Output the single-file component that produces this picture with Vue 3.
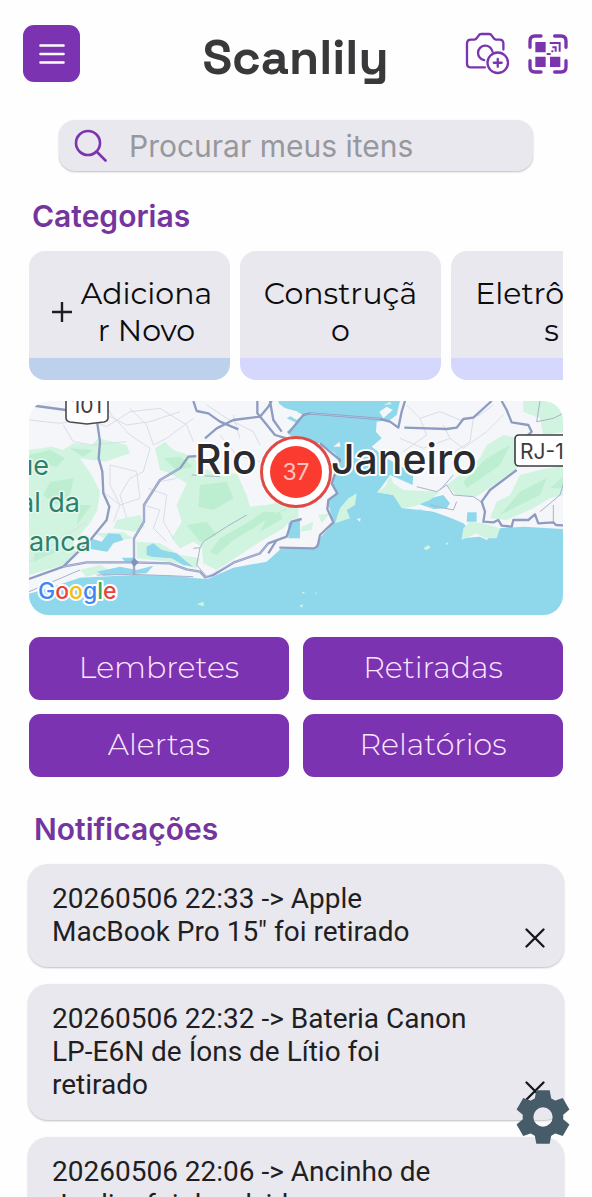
<script setup>
import { ref } from 'vue'

const search = ref('')

const categories = [
  { id: 'new', label: 'Adicionar Novo', isAdd: true },
  { id: 'construcao', label: 'Construção' },
  { id: 'eletronicos', label: 'Eletrônicos' }
]

const actions = ['Lembretes', 'Retiradas', 'Alertas', 'Relatórios']

const notifications = ref([
  { id: 1, text: '20260506 22:33 -> Apple MacBook Pro 15" foi retirado' },
  { id: 2, text: '20260506 22:32 -> Bateria Canon LP-E6N de Íons de Lítio foi retirado' },
  { id: 3, text: '20260506 22:06 -> Ancinho de Jardim foi devolvido' }
])

const gearTeeth = [0, 60, 120, 180, 240, 300]

function dismiss(id) {
  notifications.value = notifications.value.filter((n) => n.id !== id)
}
</script>

<template>
  <div class="home">
    <header class="home-header">
      <button type="button" class="menu-btn" aria-label="Menu">
        <svg width="26" height="20" viewBox="0 0 26 20">
          <path d="M1.5 1.5h23M1.5 10h23M1.5 18.5h23" stroke="#fff" stroke-width="2.6" stroke-linecap="round" />
        </svg>
      </button>
      <h1 class="home-logo">Scanlily</h1>
      <div class="header-tools">
        <button type="button" class="icon-btn" aria-label="Adicionar foto">
          <svg width="45" height="43" viewBox="0 0 136 128" fill="none" stroke="#7a35ae" stroke-width="7" stroke-linecap="round">
            <path d="M60 106H18Q6 106 6 94V34Q6 22 18 22H28Q33 22 36 17L41 10Q44 5 49 5H73Q78 5 81 10L86 17Q89 22 94 22H104Q116 22 116 34V52" />
            <path d="M58 84A22 22 0 1 1 83 58" />
            <circle cx="99" cy="92" r="31" />
            <path d="M99 80v24M87 92h24" />
          </svg>
        </button>
        <button type="button" class="icon-btn" aria-label="Ler código QR">
          <svg width="40" height="40" viewBox="0 0 120 120" fill="none" stroke="#7a35ae">
            <path
              d="M6 40V21Q6 6 21 6H39M80 6H99Q114 6 114 21V40M114 80V99Q114 114 99 114H80M39 114H21Q6 114 6 99V80"
              stroke-width="10"
              stroke-linecap="round"
            />
            <path d="M22 24h31v31H22zM22 68h31v31H22zM66 68h31v31H66z" fill="#7a35ae" stroke="none" />
            <path d="M65 27H95V53M73 40H83V53M56 60H68M70 52H76" stroke-width="6" />
          </svg>
        </button>
      </div>
    </header>

    <label class="search-bar">
      <svg width="33" height="33" viewBox="0 0 33 33" fill="none" stroke="#7a35ae" stroke-width="2.6" stroke-linecap="round">
        <circle cx="14" cy="14" r="12" />
        <path d="M22.5 22.5l9 9" />
      </svg>
      <input v-model="search" type="text" class="search-input" placeholder="Procurar meus itens" aria-label="Procurar meus itens" />
    </label>

    <h2 class="section-title">Categorias</h2>
    <div class="category-list">
      <button
        v-for="cat in categories"
        :key="cat.id"
        type="button"
        class="category-card"
        :class="{ add: cat.isAdd }"
      >
        <span class="category-body">
          <svg v-if="cat.isAdd" class="category-plus" width="22" height="22" viewBox="0 0 22 22">
            <path d="M11 1v20M1 11h20" stroke="#1d1d22" stroke-width="2.4" />
          </svg>
          <span class="category-label">{{ cat.label }}</span>
        </span>
      </button>
    </div>

    <!-- Mapa dos itens -->
    <div class="map">
      <svg class="map-canvas" viewBox="0 0 534 214" preserveAspectRatio="xMidYMid slice">
        <rect width="534" height="214" fill="#f5f6f9" />
        <g transform="scale(.333333) translate(-27 -18)" stroke-linejoin="round">
          <g fill="#d0f4df">
            <path d="M27 165L95 155 130 165 160 145 215 150 235 130 320 150 330 175 255 200 180 190 215 240 240 290 232 345 210 385 160 440 170 480 130 510 80 525 27 540Z" />
            <path d="M405 160L435 140 460 165 520 185 540 215 600 240 650 235 680 300 690 335 740 330 835 310V350L790 400 720 440 660 480 590 525 550 505 545 455 520 440 480 460 455 430 485 380 470 330 500 265 450 235 420 225Z" />
            <path d="M290 375L360 360 375 395 345 410 280 400ZM225 415L310 412 340 430 270 440ZM350 440L420 445 480 480 540 490 530 520 450 500 350 490ZM180 525L240 510 270 525 200 545Z" />
            <path d="M1510 18H1640V110L1570 120 1560 70 1510 50ZM1380 190L1400 150 1450 120 1500 130 1520 180 1490 220 1420 270 1370 305 1310 300 1280 270 1320 240ZM1500 240L1560 225 1635 210V300L1590 310 1540 340 1460 375 1410 370 1430 320 1470 300Z" />
          </g>
          <g fill="#bdeed1">
            <path d="M27 180L90 165 135 190 110 215 60 205 27 225ZM150 160L220 165 190 185ZM90 260L160 250 150 300 110 330 70 300ZM50 440L110 470 40 500ZM170 390L215 330 180 330Z" />
            <path d="M430 190L480 185 520 215 470 225ZM540 270L620 260 640 310 580 345 535 335ZM500 390L560 380 590 420 540 440ZM600 430L680 385 730 350 770 352 700 400 640 435 590 480 570 470ZM740 370L800 340 790 370 720 410Z" />
            <path d="M1400 190L1470 150 1440 210 1340 280 1330 260ZM1500 290L1580 250 1560 300 1480 340 1440 360ZM1590 280L1635 240V280Z" />
          </g>
          <g fill="none" stroke="#d9dde9" stroke-width="3">
            <path d="M27 75L120 85 200 70 260 95 330 50 420 40 500 90 520 140M130 90L160 140 215 150 320 140M250 20L275 60 330 120 390 160 370 230 330 250 300 300 320 370M330 40L380 90 400 150 440 130 520 70M260 60L320 90 390 80 480 50" />
            <path d="M270 210L350 230 360 310 300 330 270 270ZM250 290L300 330 280 380M385 280L440 300 430 380 460 430M370 330L420 345 400 400 440 440M390 300L420 260 470 250M27 500L110 440 200 380M560 30L620 70 700 110 720 150M600 120L650 180 720 200M640 60L660 130" />
            <path d="M1160 30L1200 70 1260 50 1320 75 1380 60 1420 30M1140 130L1210 160 1290 130 1330 160 1400 110 1450 60M1150 170L1220 120 1200 70M1290 130L1270 90M1360 70L1350 140 1290 180" />
          </g>
          <path
            fill="#8fd8ec"
            d="M20 598L90 578 180 548 340 540 450 541 530 550 562 552 640 518 740 500 782 462 890 462 903 425 940 385 930 345 922 318 952 290 935 268 960 200 945 175 900 145 830 140 800 110 832 85 800 70 835 50 780 35 775 18H1140L1130 60 1110 75 1070 80 1068 110 1085 130 1055 155 1100 190 1180 235 1178 270 1110 240 1095 262 1072 292 1120 300 1150 340 1250 350 1330 385 1340 395 1325 430 1380 425 1400 435 1440 400 1510 395 1635 402V670H20Z"
          />
          <g fill="#8fd8ec">
            <path d="M212 430L245 440 265 415 300 418 310 435 280 445 262 470 212 462ZM380 455L400 445 425 465 470 475 500 500 520 515 490 510 455 490 395 485 380 480ZM230 530L300 515 350 525 400 512 380 535 250 542ZM305 488H340V500H315ZM805 385Q815 372 840 375V430H805Z" />
            <path d="M1180 335L1230 310 1270 300 1290 325 1280 340 1200 345ZM1342 352H1370V380H1340Z" />
          </g>
          <g fill="#f5f6f9">
            <path d="M775 25L810 50 790 60ZM805 60L830 50 850 60 830 75ZM1078 50L1100 35 1118 45 1090 70ZM940 155L958 140 962 155ZM1020 380L1010 372 1022 370ZM1150 335L1190 325 1250 345 1310 362 1320 378 1240 350Z" />
          </g>
          <g fill="#d0f4df">
            <path d="M1072 292L1095 275 1110 240 1120 265 1150 285 1260 290 1230 315 1180 335 1145 340 1120 300ZM960 340L985 310 1010 295 1005 330 980 345 990 370 945 385ZM845 395L880 380 875 405 840 410ZM895 360L930 355 905 385ZM1330 400L1350 380 1390 385 1440 400 1430 430 1395 430 1370 415 1325 435ZM780 350L835 340V370L790 380Z" />
            <path d="M1210 460L1225 450 1232 458 1218 466ZM1276 446L1286 440 1282 450ZM530 628L550 620 552 634ZM845 590L855 592 850 597ZM838 632L850 628 846 638ZM885 592L892 594 887 597ZM1090 30L1110 20 1115 28Z" />
          </g>
          <path fill="none" stroke="#a9b2ca" stroke-width="3" d="M540 460L550 440 620 395 680 360M515 240L600 245M520 460L540 458 530 510 560 545M1190 275L1250 290 1280 270 1300 300 1360 305 1390 325M1260 285L1300 240M1230 330L1300 345 1310 320M1635 250L1620 300 1560 350M1600 330V385M27 590L180 525M1560 18L1550 80 1600 70 1630 55M230 540L340 538 520 545" />
          <g fill="none" stroke="#8f9cc2" stroke-width="7">
            <path d="M27 30L160 48M232 85L240 140 236 190 247 230 250 295 268 335 260 375 215 430 130 515" />
            <path d="M27 552L130 515 200 502 340 502 450 505 500 523 540 530 556 547 580 540 640 503 720 475 745 445 800 425 815 380 845 372" />
            <path d="M342 540V430L372 380V330L420 255 480 220 505 185 540 183M555 130L590 100 640 75 720 65 745 35 755 18M520 18L530 48 565 55 600 80 655 103M712 18V55L765 120 800 130M750 18L760 75 785 110" />
            <path d="M805 115L850 60 870 55 1080 72 1110 80 1135 98 1145 50 1155 18M1153 98L1280 102 1310 98 1330 72 1360 68 1415 18M1445 18L1460 45 1475 82 1525 90 1535 110 1515 130M1490 225L1410 285 1385 320 1395 350 1390 380 1420 382 1435 375 1445 392 1475 395 1480 375 1525 375 1545 358 1555 385 1600 382 1608 390 1640 392" />
            <path d="M745 475L770 435M778 458L880 460Q892 460 895 445L900 420 940 382 922 342 925 315 952 295 935 265 960 195 900 145" />
          </g>
          <path fill="none" stroke="#c6d0ea" stroke-width="2" d="M130 515L200 502 340 502 450 505 500 523 540 530 556 547 640 503 720 475 745 445M342 540V430L372 380V330L420 255 480 220M870 55L1080 72" />
          <path d="M333 502l9-14 14 14-14 14z" fill="#8291bd" />
        </g>
        <path d="M37-4V17Q37 20 41 21L58 23 75 21Q79 20 79 17V-4Z" fill="#fff" stroke="#4a4a4d" stroke-width="1.6" />
        <rect x="486" y="34" width="60" height="31" rx="4" fill="#fff" stroke="#3c3c40" stroke-width="1.6" />
        <g class="map-shield">
          <text x="58" y="12" text-anchor="middle">101</text>
          <text x="491" y="58">RJ-106</text>
        </g>
        <g class="map-park">
          <text x="20" y="74" text-anchor="end">que</text>
          <text x="51" y="111" text-anchor="end">tural da</text>
          <text x="62" y="150" text-anchor="end">Branca</text>
        </g>
        <g class="map-city">
          <text x="166" y="73">Rio</text>
          <text x="302" y="73">Janeiro</text>
        </g>
        <text class="map-google" x="9" y="198"><tspan fill="#4285f4">G</tspan><tspan fill="#ea4335">o</tspan><tspan fill="#fbbc05">o</tspan><tspan fill="#4285f4">g</tspan><tspan fill="#34a853">l</tspan><tspan fill="#ea4335">e</tspan></text>
        <circle cx="267" cy="71" r="34.5" fill="#fff" stroke="#e04a46" stroke-width="3" />
        <circle cx="267" cy="71" r="26" fill="#fb3a30" />
        <text class="map-count" x="267" y="79" text-anchor="middle">37</text>
      </svg>
    </div>

    <div class="action-grid">
      <button v-for="action in actions" :key="action" type="button" class="action-btn">{{ action }}</button>
    </div>

    <h2 class="section-title notifications-title">Notificações</h2>
    <div class="notification-list">
      <article v-for="item in notifications" :key="item.id" class="notification-card">
        <p class="notification-text">{{ item.text }}</p>
        <button type="button" class="notification-close" aria-label="Fechar" @click="dismiss(item.id)">
          <svg width="20" height="20" viewBox="0 0 20 20">
            <path d="M1.5 1.5l17 17M18.5 1.5l-17 17" stroke="#17171b" stroke-width="2.3" stroke-linecap="round" />
          </svg>
        </button>
      </article>
    </div>

    <button type="button" class="settings-btn" aria-label="Configurações">
      <svg width="54" height="54" viewBox="-81 -81 162 162">
        <circle r="45" fill="none" stroke="#475c69" stroke-width="32" />
        <path
          v-for="angle in gearTeeth"
          :key="angle"
          d="M-20-80H20L26-48H-26Z"
          fill="#475c69"
          :transform="`rotate(${angle})`"
        />
      </svg>
    </button>
  </div>
</template>

<style>
body {
  margin: 0;
  background: #fefefe;
}
</style>

<style scoped>
.home {
  box-sizing: border-box;
  height: 100vh;
  overflow: hidden;
  display: flex;
  flex-direction: column;
  padding-top: 25px;
  background: #fefefe;
  font-family: Inter, "Liberation Sans", sans-serif;
}

.home > * {
  flex-shrink: 0;
}

button {
  border: none;
  padding: 0;
  font-family: inherit;
  cursor: pointer;
}

svg {
  display: block;
}

.home-header {
  display: grid;
  grid-template-columns: 1fr auto 1fr;
  align-items: start;
  padding: 0 24px 0 23px;
}

.menu-btn {
  display: flex;
  align-items: center;
  justify-content: center;
  width: 57px;
  height: 57px;
  border-radius: 11px;
  background: #7b33b1;
}

.home-logo {
  margin: 0;
  font-family: "Space Grotesk", Inter, sans-serif;
  font-size: 49px;
  font-weight: 600;
  line-height: 64px;
  color: #39393b;
}

.header-tools {
  display: flex;
  align-items: center;
  justify-content: flex-end;
  gap: 18px;
  height: 57px;
}

.icon-btn {
  background: none;
}

.search-bar {
  display: flex;
  align-items: center;
  gap: 22px;
  height: 51px;
  margin: 31px 59px 0;
  padding: 0 15px;
  border-radius: 16px;
  background: #e9e8ee;
  box-shadow: 0 1px 2px rgba(0, 0, 0, 0.25);
}

.search-input {
  flex: 1;
  min-width: 0;
  padding: 1px 0 0;
  border: none;
  outline: none;
  background: none;
  font-family: inherit;
  font-size: 30px;
  color: #39393b;
}

.search-input::placeholder {
  color: #97989e;
  opacity: 1;
}

.section-title {
  margin: 26px 32px 0;
  font-size: 30px;
  font-weight: 600;
  line-height: 38px;
  color: #75359f;
}

.category-list {
  display: flex;
  gap: 10px;
  margin: 16px 29px 0;
  overflow: hidden;
}

.category-card {
  flex: 0 0 201px;
  display: flex;
  flex-direction: column;
  height: 129px;
  overflow: hidden;
  border-radius: 16px;
  border-bottom: 22px solid #d5d7fc;
  background: #e9e8ee;
}

.category-card.add {
  border-bottom-color: #bdd1ec;
}

.category-body {
  flex: 1;
  display: flex;
  align-items: center;
  justify-content: center;
  box-sizing: border-box;
  width: 100%;
  padding: 14px 20px 0;
}

.category-card.add .category-body {
  gap: 6px;
  padding-right: 16px;
  padding-left: 22px;
}

.category-plus {
  flex-shrink: 0;
}

.category-label {
  flex: 1;
  min-width: 0;
  overflow-wrap: anywhere;
  font-family: Montserrat, Inter, sans-serif;
  font-size: 30px;
  line-height: 37px;
  color: #0c0c0f;
}

.map {
  margin: 21px 29px 0;
  overflow: hidden;
  border-radius: 20px;
}

.map-canvas {
  width: 100%;
  height: 214px;
}

.map-canvas text {
  paint-order: stroke;
  stroke-linejoin: round;
}

.map-shield {
  font-size: 21px;
  fill: #3c3c40;
}

.map-park {
  font-size: 27px;
  fill: #2c8268;
  stroke: #e6f8ee;
  stroke-width: 3px;
}

.map-city {
  font-size: 41px;
  font-weight: 500;
  fill: #2a2b30;
  stroke: #fff;
  stroke-width: 4px;
}

.map-google {
  font-size: 23px;
  font-weight: 500;
  stroke: #fff;
  stroke-width: 4px;
}

.map-count {
  font-size: 23px;
  fill: #ffc4bd;
}

.action-grid {
  display: grid;
  grid-template-columns: 1fr 1fr;
  gap: 14px;
  margin: 22px 29px 0;
}

.action-btn {
  height: 63px;
  padding-bottom: 2px;
  border-radius: 11px;
  background: #7b33b1;
  font-family: Montserrat, Inter, sans-serif;
  font-size: 30px;
  font-weight: 300;
  color: #fbe6ff;
}

.notifications-title {
  margin: 33px 34px 0;
}

.notification-list {
  display: flex;
  flex-direction: column;
  gap: 17px;
  margin: 16px 28px 0;
}

.notification-card {
  position: relative;
  padding: 18px 86px 19px 24px;
  border-radius: 20px;
  background: #e9e8ee;
  box-shadow: 0 1px 2px rgba(0, 0, 0, 0.25);
}

.notification-text {
  margin: 0;
  font-family: Roboto, sans-serif;
  font-size: 28px;
  line-height: 33px;
  color: #1f1f23;
}

.notification-close {
  position: absolute;
  right: 19px;
  bottom: 19px;
  background: none;
}

.settings-btn {
  position: fixed;
  right: 22px;
  bottom: 53px;
  background: none;
}
</style>
